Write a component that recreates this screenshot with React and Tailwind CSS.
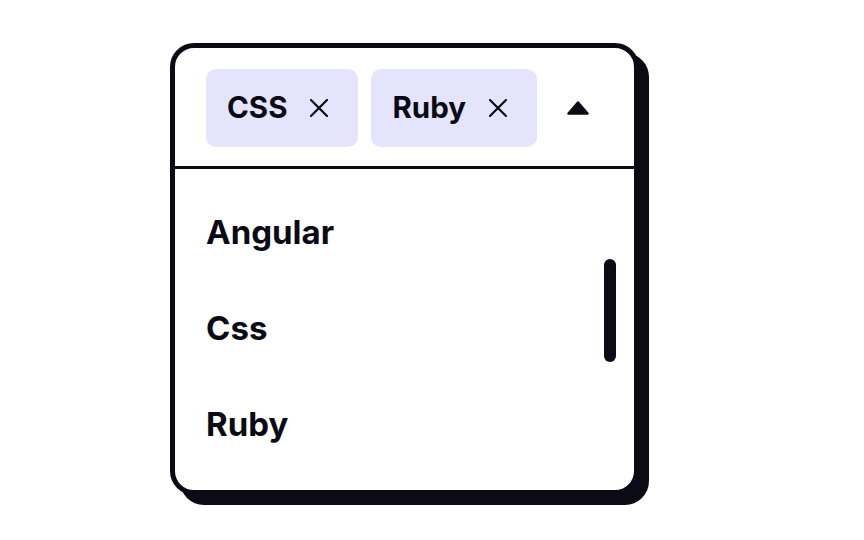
import { useState } from "react";

const options = ["Angular", "Css", "Ruby"];

const CloseIcon = () => (
  <svg width="18" height="18" viewBox="0 0 18 18" fill="none" stroke="currentColor" strokeWidth="2.2" strokeLinecap="round">
    <path d="M1 1l16 16M17 1L1 17" />
  </svg>
);

const CaretUp = () => (
  <svg width="22" height="14" viewBox="0 0 22 14" fill="currentColor" stroke="currentColor" strokeWidth="2.5" strokeLinejoin="round">
    <path d="M11 1.5L20.5 12.5H1.5Z" />
  </svg>
);

function Chip({ label }) {
  return (
    <div className="flex h-[78px] items-center rounded-[10px] bg-[#e4e4fc] pl-[21px] pr-[30px]">
      <span className="text-[29.5px] font-bold leading-none">{label}</span>
      <span className="ml-[23px] flex">
        <CloseIcon />
      </span>
    </div>
  );
}

export default function App() {
  const [selected] = useState(["CSS", "Ruby"]);

  return (
    <div
      className="h-[540px] w-[864px] bg-white pl-[170px] pt-[43px] text-[#0b0b15]"
      style={{ fontFamily: "Inter, 'Noto Sans', sans-serif" }}
    >
      <div className="flex h-[452px] w-[469px] flex-col rounded-3xl border-[5px] border-[#0b0b15] bg-white shadow-[10px_10px_0_0_#0b0b15]">
        <div className="flex h-[121px] items-start border-b-[3px] border-[#0b0b15] pl-[31px] pr-[45px] pt-[21px]">
          <div className="flex gap-[13px]">
            {selected.map((s) => (
              <Chip key={s} label={s} />
            ))}
          </div>
          <span className="ml-auto mt-[32px] flex">
            <CaretUp />
          </span>
        </div>
        <div className="flex flex-1">
          <ul className="flex flex-1 flex-col py-[16px] pl-[31px]">
            {options.map((o) => (
              <li key={o} className="flex h-[96px] items-center text-[33px] font-bold">
                {o}
              </li>
            ))}
          </ul>
          <div className="mr-[18px] mt-[90px] h-[103px] w-3 rounded-full bg-[#0b0b15]" />
        </div>
      </div>
    </div>
  );
}
